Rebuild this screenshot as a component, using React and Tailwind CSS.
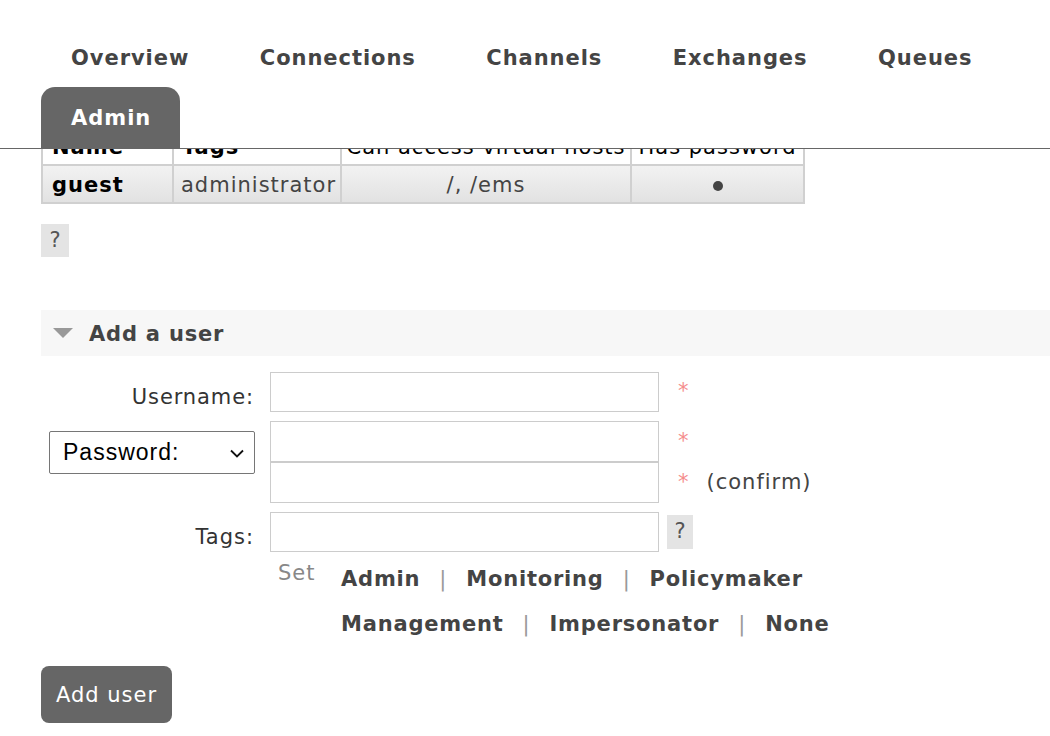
import React from "react";

const tabs = ["Overview", "Connections", "Channels", "Exchanges", "Queues"];

function Sep() {
  return <span className="mx-[19px] font-normal text-[#999]">|</span>;
}

export default function App() {
  return (
    <div className="w-[1050px] min-h-[736px] bg-white font-['DejaVu_Sans','Verdana',sans-serif] text-[21px] tracking-[1px] text-[#444] overflow-hidden">
      {/* nav */}
      <div className="border-b border-[#666]">
        <div className="flex flex-wrap pl-[41px] pt-[26px]">
          {tabs.map((t) => (
            <div key={t} className="h-[61px] pl-[30px] pr-[29px] mr-[11.5px] pt-[4px] flex items-center font-bold tracking-[0.95px] text-[#444]">
              {t}
            </div>
          ))}
          <div className="h-[61px] pl-[30px] pr-[29px] pt-[2px] flex items-center font-bold tracking-[1px] text-white bg-[#666] rounded-t-[14px]">
            Admin
          </div>
        </div>
      </div>

      {/* users table (scrolled under header) */}
      <div className="ml-[41px] w-fit overflow-hidden">
        <div className="-mt-[22px]">
          <div className="flex h-[39px] border-b-2 border-[#d0d0d0] leading-[25px] text-black bg-white">
            <div className="w-[131px] border-l-2 border-[#d0d0d0] px-[9px] flex items-end pb-[4px] font-bold">Name</div>
            <div className="w-[168px] border-l-2 border-[#d0d0d0] px-[8px] flex items-end pb-[4px] font-bold">Tags</div>
            <div className="w-[290px] border-l-2 border-[#d0d0d0] px-[2px] flex items-end justify-center pb-[4px] whitespace-nowrap">Can access virtual hosts</div>
            <div className="w-[175px] border-x-2 border-[#d0d0d0] px-[2px] flex items-end justify-center pb-[4px] whitespace-nowrap">Has password</div>
          </div>
          <div className="flex h-[38px] border-b-2 border-[#d0d0d0] bg-gradient-to-b from-[#f2f2f2] to-[#e2e2e2]">
            <div className="w-[131px] border-l-2 border-[#d0d0d0] px-[9px] pt-[4px] flex items-center font-bold text-black">guest</div>
            <div className="w-[168px] border-l-2 border-[#d0d0d0] px-[7px] pt-[4px] flex items-center">administrator</div>
            <div className="w-[290px] border-l-2 border-[#d0d0d0] pt-[4px] flex items-center justify-center">/, /ems</div>
            <div className="w-[175px] border-x-2 border-[#d0d0d0] pt-[4px] flex items-center justify-center">
              <span className="block w-[10px] h-[10px] rounded-full bg-[#444]" />
            </div>
          </div>
        </div>
      </div>

      {/* help */}
      <div className="ml-[41px] mt-[20px] w-[28px] h-[33px] bg-[#e4e4e4] flex items-center justify-center text-[#555] tracking-normal">?</div>

      {/* section header */}
      <div className="ml-[41px] mt-[53px] h-[46px] bg-[#f7f7f7] flex items-center">
        <span className="ml-[12px] w-0 h-0 border-l-[10px] border-r-[10px] border-t-[10px] border-l-transparent border-r-transparent border-t-[#999]" />
        <span className="ml-[16px] pt-[4px] font-bold tracking-[0.8px] text-[#444]">Add a user</span>
      </div>

      {/* form */}
      <div className="mt-[16px] ml-[41px] text-[#333]">
        <div className="flex items-center h-[40px]">
          <div className="w-[213px] text-right pt-[11px] tracking-[0.9px]">Username:</div>
          <div className="ml-[16px] w-[389px] h-[40px] border border-[#ccc] bg-white" />
          <span className="ml-[19px] text-[#f58c8c]">*</span>
        </div>

        <div className="flex mt-[9px]">
          <div className="w-[214px] pl-[8px] pt-[10px]">
            <div className="relative w-[206px] h-[43px] border border-[#767676] rounded-[2px] bg-white flex items-center pl-[13px] font-['Liberation_Sans','Arial',sans-serif] text-[23px] tracking-[1px] text-black">
              Password:
              <svg className="absolute right-[10px] top-[17px]" width="14" height="9" viewBox="0 0 14 9" fill="none">
                <path d="M1 1.5 L7 7.5 L13 1.5" stroke="#111" strokeWidth="1.8" />
              </svg>
            </div>
          </div>
          <div className="ml-[15px] flex flex-col">
            <div className="flex items-center h-[41px]">
              <div className="w-[389px] h-[41px] border border-[#ccc] bg-white" />
              <span className="ml-[19px] text-[#f58c8c]">*</span>
            </div>
            <div className="flex items-center h-[41px]">
              <div className="w-[389px] h-[41px] border border-[#ccc] bg-white" />
              <span className="ml-[19px] text-[#f58c8c]">*</span>
              <span className="ml-[17px] text-[#444]">(confirm)</span>
            </div>
          </div>
        </div>

        <div className="flex items-center h-[40px] mt-[9px]">
          <div className="w-[213px] text-right pt-[11px]">Tags:</div>
          <div className="ml-[16px] w-[389px] h-[40px] border border-[#ccc] bg-white" />
          <div className="ml-[8px] w-[26px] h-[34px] bg-[#e4e4e4] flex items-center justify-center text-[#555] tracking-normal">?</div>
        </div>

        <div className="flex items-start mt-[5px] ml-[237px]">
          <span className="w-[63px] leading-[33px] text-[#888]">Set</span>
          <div className="font-bold tracking-[0.8px] text-[#444] leading-[45px]">
            <div>
              Admin<Sep />Monitoring<Sep />Policymaker
            </div>
            <div>
              Management<Sep />Impersonator<Sep />None
            </div>
          </div>
        </div>

        <button className="mt-[19px] w-[131px] h-[57px] rounded-[8px] bg-[#666] text-white text-[21px] tracking-[1px] pt-[3px] font-['DejaVu_Sans','Verdana',sans-serif]">
          Add user
        </button>
      </div>
    </div>
  );
}
